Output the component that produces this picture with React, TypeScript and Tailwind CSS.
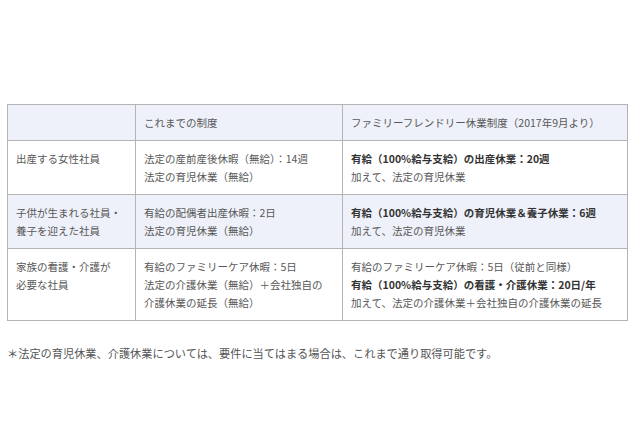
const font = { fontFamily: '"Noto Sans CJK JP", "Noto Sans", sans-serif' };

type Line = { text: string; bold?: boolean };
type Row = { who: string[]; before: Line[]; after: Line[]; shaded?: boolean };

const rows: Row[] = [
  {
    who: ["出産する女性社員"],
    before: [{ text: "法定の産前産後休暇（無給）：14週" }, { text: "法定の育児休業（無給）" }],
    after: [{ text: "有給（100%給与支給）の出産休業：20週", bold: true }, { text: "加えて、法定の育児休業" }],
  },
  {
    who: ["子供が生まれる社員・", "養子を迎えた社員"],
    before: [{ text: "有給の配偶者出産休暇：2日" }, { text: "法定の育児休業（無給）" }],
    after: [{ text: "有給（100%給与支給）の育児休業＆養子休業：6週", bold: true }, { text: "加えて、法定の育児休業" }],
    shaded: true,
  },
  {
    who: ["家族の看護・介護が", "必要な社員"],
    before: [
      { text: "有給のファミリーケア休暇：5日" },
      { text: "法定の介護休業（無給）＋会社独自の" },
      { text: "介護休業の延長（無給）" },
    ],
    after: [
      { text: "有給のファミリーケア休暇：5日（従前と同様）" },
      { text: "有給（100%給与支給）の看護・介護休業：20日/年", bold: true },
      { text: "加えて、法定の介護休業＋会社独自の介護休業の延長" },
    ],
  },
];

const Cell = ({ lines }: { lines: Line[] }) => (
  <td className="border border-[#b4b4b4] pl-[8px] pr-2 pt-[9px] pb-[8px] align-top">
    {lines.map((l, i) => (
      <div key={i} className={l.bold ? "font-bold text-[#333]" : ""}>
        {l.text}
      </div>
    ))}
  </td>
);

export default function App() {
  return (
    <div className="w-[640px] h-[426px] bg-white px-[7px] pt-[104px]" style={font}>
      <table className="w-[621px] table-fixed border-collapse text-[10.5px] leading-[18px] text-[#585858]">
        <thead>
          <tr className="bg-[#eef1f9]">
            <th className="w-[128px] border border-[#b4b4b4] font-normal text-left pl-[8px] pt-[9px] pb-[8px]"></th>
            <th className="w-[207px] border border-[#b4b4b4] font-normal text-left pl-[8px] pt-[9px] pb-[8px]">
              これまでの制度
            </th>
            <th className="border border-[#b4b4b4] font-normal text-left pl-[8px] pt-[9px] pb-[8px]">
              ファミリーフレンドリー休業制度（2017年9月より）
            </th>
          </tr>
        </thead>
        <tbody>
          {rows.map((r, i) => (
            <tr key={i} className={r.shaded ? "bg-[#eef1f9]" : "bg-white"}>
              <Cell lines={r.who.map((t) => ({ text: t }))} />
              <Cell lines={r.before} />
              <Cell lines={r.after} />
            </tr>
          ))}
        </tbody>
      </table>
      <p className="mt-[23px] text-[11.2px] leading-[18px] text-[#555]">
        ＊法定の育児休業、介護休業については、要件に当てはまる場合は、これまで通り取得可能です。
      </p>
    </div>
  );
}
